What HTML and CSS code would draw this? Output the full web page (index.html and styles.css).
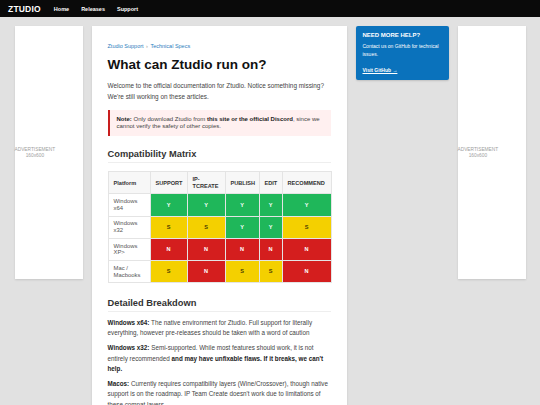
FILE: index.html
```html
<!DOCTYPE html>
<html lang="en">
<head>
<meta charset="utf-8">
<title>Ztudio Support - Technical Specs</title>
<link rel="stylesheet" href="styles.css">
</head>
<body>
<header class="topbar">
  <div class="logo">ZTUDIO</div>
  <nav class="nav">
    <a href="#">Home</a>
    <a href="#">Releases</a>
    <a href="#">Support</a>
  </nav>
</header>
<div class="layout">
  <aside class="ad"><div class="ad-text">ADVERTISEMENT<br>160x600</div></aside>
  <main class="content">
    <div class="crumbs"><a href="#">Ztudio Support</a><span class="sep">›</span><a href="#">Technical Specs</a></div>
    <h1 class="title">What can Ztudio run on?</h1>
    <p class="intro">Welcome to the official documentation for Ztudio. Notice something missing? We're still working on these articles.</p>
    <div class="note"><b>Note:</b> Only download Ztudio from <b>this site or the official Discord</b>, since we cannot verify the safety of other copies.</div>
    <h2 class="section">Compatibility Matrix</h2>
    <table class="matrix">
      <thead>
        <tr>
          <th class="c-plat">Platform</th>
          <th class="c-sup">SUPPORT</th>
          <th class="c-ip">IP-<br>TCREATE</th>
          <th class="c-pub">PUBLISH</th>
          <th class="c-edit">EDIT</th>
          <th class="c-rec">RECOMMEND</th>
        </tr>
      </thead>
      <tbody>
        <tr><td class="plat">Windows x64</td><td class="y">Y</td><td class="y">Y</td><td class="y">Y</td><td class="y">Y</td><td class="y">Y</td></tr>
        <tr><td class="plat">Windows x32</td><td class="s">S</td><td class="s">S</td><td class="y">Y</td><td class="y">Y</td><td class="s">S</td></tr>
        <tr><td class="plat">Windows XP&gt;</td><td class="n">N</td><td class="n">N</td><td class="n">N</td><td class="n">N</td><td class="n">N</td></tr>
        <tr><td class="plat">Mac / Macbooks</td><td class="s">S</td><td class="n">N</td><td class="s">S</td><td class="s">S</td><td class="n">N</td></tr>
      </tbody>
    </table>
    <h2 class="section section-2">Detailed Breakdown</h2>
    <p class="detail"><b>Windows x64:</b> The native environment for Ztudio. Full support for literally everything, however pre-releases should be taken with a word of caution</p>
    <p class="detail"><b>Windows x32:</b> Semi-supported. While most features should work, it is not entirely recommended <b>and may have unfixable flaws. If it breaks, we can't help.</b></p>
    <p class="detail"><b>Macos:</b> Currently requires compatibility layers (Wine/Crossover), though native support is on the roadmap. IP Team Create doesn't work due to limitations of these compat layers.</p>
  </main>
  <aside class="side">
    <div class="help">
      <div class="help-title">NEED MORE HELP?</div>
      <p class="help-text">Contact us on GitHub for technical issues.</p>
      <a class="help-link" href="#">Visit GitHub →</a>
    </div>
  </aside>
  <aside class="ad"><div class="ad-text">ADVERTISEMENT<br>160x600</div></aside>
</div>
</body>
</html>
```
FILE: styles.css
```css
* { box-sizing: border-box; }
html, body { margin: 0; padding: 0; }
body {
  background: #e1e1e1;
  font-family: "Liberation Sans", Arial, sans-serif;
  color: #333;
  height: 405px;
  overflow: hidden;
}
.topbar {
  height: 17px;
  background: #0a0a0a;
  display: flex;
  align-items: center;
  padding-left: 8px;
}
.logo {
  color: #fff;
  font-weight: bold;
  font-size: 8.5px;
  letter-spacing: 0.2px;
  margin-right: 13px;
}
.nav { display: flex; gap: 12px; }
.nav a {
  color: #fff;
  text-decoration: none;
  font-weight: bold;
  font-size: 5.5px;
}
.layout {
  display: grid;
  grid-template-columns: 68px 255px 93px 68px;
  column-gap: 9px;
  padding-left: 14.5px;
  margin-top: 9px;
  align-items: start;
}
.ad {
  height: 253px;
  background: #fff;
  box-shadow: 0 1px 2px rgba(0,0,0,0.12);
  display: flex;
  align-items: center;
}
.ad-text {
  font-size: 4.8px;
  line-height: 5.8px;
  color: #a0a0a0;
  text-align: center;
}
.content {
  background: #fff;
  box-shadow: 0 1px 2px rgba(0,0,0,0.12);
  padding: 16px 16px 20px;
  min-height: 400px;
}
.crumbs {
  font-size: 5.5px;
  line-height: 8px;
}
.crumbs a { color: #2d7dbd; text-decoration: none; }
.crumbs .sep { color: #999; margin: 0 2.5px; }
.title {
  margin: 7px 0 0;
  font-size: 13.5px;
  line-height: 16px;
  color: #111;
}
.intro {
  margin: 8px 0 0;
  font-size: 6.4px;
  line-height: 10.7px;
  color: #444;
}
.note {
  margin-top: 7.5px;
  background: #fff0f0;
  border-left: 2px solid #c81e1e;
  padding: 6px 8px 5.5px 7px;
  font-size: 6px;
  line-height: 7.4px;
  color: #444;
}
.note b { color: #222; }
.section {
  margin: 12.5px 0 0;
  font-size: 9.3px;
  line-height: 11px;
  color: #333;
  padding-bottom: 2px;
  border-bottom: 1px solid #eee;
}
.section-2 { margin-top: 15px; }
.matrix {
  margin-top: 8.5px;
  width: 223px;
  table-layout: fixed;
  border-collapse: collapse;
  font-size: 5.6px;
}
.matrix th, .matrix td {
  border: 1px solid #e4e4e4;
  padding: 4px 5px;
  line-height: 6.6px;
}
.matrix th {
  background: #f7f7f7;
  text-align: left;
  font-weight: bold;
  color: #333;
  white-space: nowrap;
  vertical-align: middle;
}
.c-plat { width: 42px; }
.c-sup { width: 37px; }
.c-ip { width: 38px; }
.c-pub { width: 34px; }
.c-edit { width: 23px; }
.c-rec { width: 49px; }
.matrix td { height: 22.2px; line-height: 6.8px; padding: 3.5px 5px; }
.matrix td.plat { color: #555; font-size: 5.9px; padding-right: 9px; }
.matrix td.y, .matrix td.s, .matrix td.n {
  text-align: center;
  font-weight: bold;
  font-size: 5.6px;
}
.matrix td.y { background: #1fb75a; color: #fff; }
.matrix td.s { background: #f4d000; color: #4a3d00; }
.matrix td.n { background: #d41e1e; color: #fff; }
.detail {
  margin: 5px 0 0;
  font-size: 6.3px;
  line-height: 10.3px;
  color: #444;
}
.section-2 + .detail { margin-top: 5.5px; }
.detail b { color: #222; }
.help {
  background: #0a72bc;
  border-radius: 2px;
  box-shadow: 0 1px 2px rgba(0,0,0,0.15);
  padding: 5px 7px 5px;
  color: #fff;
}
.help-title {
  font-size: 6px;
  line-height: 8px;
  font-weight: bold;
}
.help-text {
  margin: 4px 0 0;
  font-size: 5px;
  line-height: 7.7px;
}
.help-link {
  display: block;
  margin-top: 8.3px;
  color: #fff;
  font-size: 5px;
  line-height: 7.8px;
  font-weight: bold;
}
```
